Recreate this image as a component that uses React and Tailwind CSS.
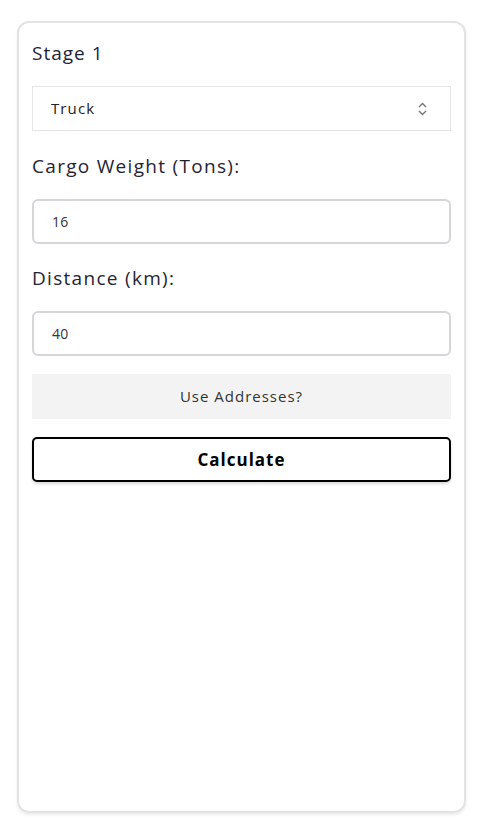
import { useState } from "react"

const font = { fontFamily: '"Open Sans", "DejaVu Sans", sans-serif' }

const Field = ({ label, value, onChange, first }) => (
  <div>
    <label
      className={`block ${first ? "mt-[21px]" : "mt-5"} text-[19px] leading-[28px] tracking-[1.3px] text-[#1f2433]`}
    >
      {label}
    </label>
    <input
      className="mt-[19px] block w-full h-[45px] px-[18px] text-[14px] tracking-[0.3px] text-[#333] border-2 border-[#d4d6dc] rounded-[6px] outline-none"
      value={value}
      onChange={(e) => onChange(e.target.value)}
    />
  </div>
)

export default function App() {
  const [vehicle, setVehicle] = useState("Truck")
  const [weight, setWeight] = useState("16")
  const [distance, setDistance] = useState("40")

  return (
    <div className="w-[483px] h-[823px] bg-white pt-[21px] pl-[17px]" style={font}>
      <div className="w-[449px] h-[792px] border-2 border-[#e3e3e3] rounded-[12px] shadow-[0_2px_3px_rgba(0,0,0,0.08)] px-[13px] pt-4">
        <h2 className="text-[19px] leading-[28px] tracking-[1px] text-[#1f2433]">Stage 1</h2>
        <div className="relative mt-[19px] h-[45px] border border-[#e5e5e5]">
          <select
            className="appearance-none w-full h-full bg-transparent pl-[18px] text-[15px] tracking-[1.1px] text-[#222] outline-none"
            value={vehicle}
            onChange={(e) => setVehicle(e.target.value)}
          >
            <option>Truck</option>
            <option>Rail</option>
            <option>Ship</option>
          </select>
          <svg
            className="absolute right-[22px] top-[15px] pointer-events-none"
            width="11"
            height="14"
            viewBox="0 0 11 14"
            fill="none"
            stroke="#777"
            strokeWidth="1.4"
          >
            <path d="M2 5 L5.5 1.5 L9 5" />
            <path d="M2 9 L5.5 12.5 L9 9" />
          </svg>
        </div>
        <Field label="Cargo Weight (Tons):" value={weight} onChange={setWeight} first />
        <Field label="Distance (km):" value={distance} onChange={setDistance} />
        <button className="mt-[18px] block w-full h-[45px] bg-[#f3f3f3] text-[15px] tracking-[1px] text-[#333]">
          Use Addresses?
        </button>
        <button className="mt-[18px] block w-full h-[45px] border-2 border-black rounded-[5px] bg-white text-[17px] font-bold tracking-[1px] text-black shadow-[0_2px_3px_rgba(0,0,0,0.15)]">
          Calculate
        </button>
      </div>
    </div>
  )
}
